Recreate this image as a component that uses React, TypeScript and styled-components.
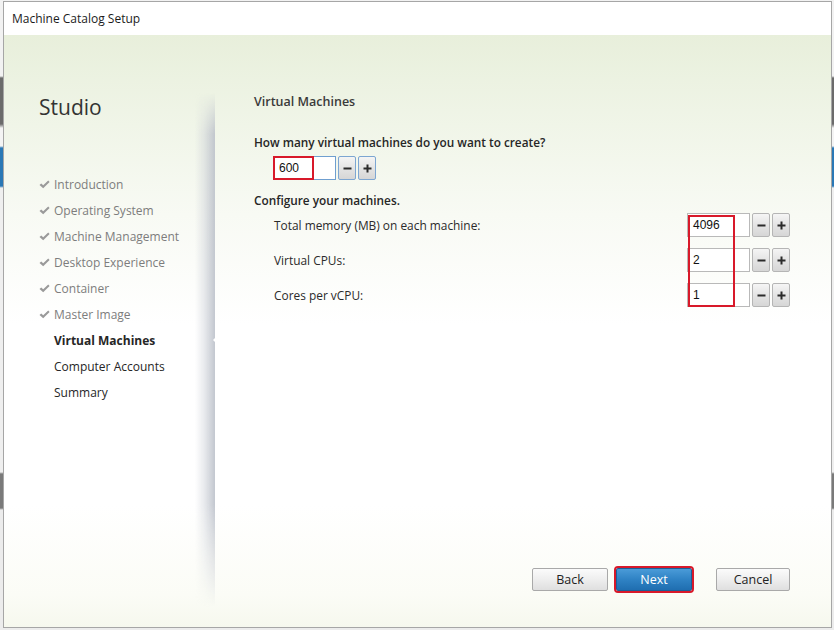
import React from "react";
import styled, { createGlobalStyle, css } from "styled-components";

const GlobalStyle = createGlobalStyle`
  html, body {
    margin: 0;
    padding: 0;
  }
  body {
    width: 834px;
    height: 630px;
    overflow: hidden;
    font-family: "Open Sans", "Noto Sans", sans-serif;
    /* the desktop peeking out behind the dialog */
    background: linear-gradient(
      to bottom,
      #f2f2f2 0px,
      #f2f2f2 76px,
      #6b6b6b 78px,
      #6b6b6b 124px,
      #f4f4f4 128px,
      #f4f4f4 146px,
      #2a78b6 148px,
      #2a78b6 186px,
      #efefef 188px,
      #efefef 472px,
      #7a7a7a 474px,
      #7a7a7a 508px,
      #ececec 510px
    );
  }
`;

const Desktop = styled.div`
  padding: 1px 0 0 3px;
`;

const Window = styled.div`
  width: 829px;
  height: 627px;
  border: 1px solid #a6a6a6;
  box-sizing: border-box;
  display: flex;
  flex-direction: column;
  background: #fff;
`;

const TitleBar = styled.div`
  height: 33px;
  flex: none;
  display: flex;
  align-items: center;
  padding-left: 8px;
  font-size: 12px;
  color: #1b1b1b;
  background: #fff;
`;

const Body = styled.div`
  flex: 1;
  display: flex;
  background: linear-gradient(
    to bottom,
    #e8efdb 0px,
    #f0f5e8 90px,
    #f8faf4 180px,
    #ffffff 290px,
    #ffffff 470px,
    #fbfcf6 560px,
    #f6f8ee 100%
  );
`;

const Sidebar = styled.div`
  width: 211px;
  flex: none;
  padding: 58px 0 0 35px;
  box-sizing: border-box;
`;

const Brand = styled.div`
  font-size: 21px;
  line-height: 28px;
  color: #333;
  font-weight: 500;
  margin-bottom: 50px;
`;

const NavList = styled.ul`
  list-style: none;
  margin: 0;
  padding: 0;
`;

type StepState = "done" | "current" | "todo";

const NavItem = styled.li<{ $state: StepState }>`
  position: relative;
  display: flex;
  align-items: center;
  height: 26px;
  font-size: 12px;
  color: ${({ $state }) => ($state === "done" ? "#7d7d7d" : "#262626")};
  font-weight: ${({ $state }) => ($state === "current" ? 700 : 400)};

  ${({ $state }) =>
    $state === "current" &&
    css`
      &::after {
        content: "";
        position: absolute;
        right: -4px;
        top: 7px;
        width: 0;
        height: 0;
        border-top: 6px solid transparent;
        border-bottom: 6px solid transparent;
        border-right: 6px solid #fff;
        z-index: 2;
      }
    `}
`;

const CheckSlot = styled.span`
  width: 15px;
  flex: none;
  display: flex;
  align-items: center;
`;

const Panel = styled.div`
  position: relative;
  flex: 1;
  display: flex;
  flex-direction: column;
  padding: 58px 41px 36px 39px;

  &::before {
    content: "";
    position: absolute;
    left: -20px;
    top: 58px;
    bottom: 20px;
    width: 20px;
    background: linear-gradient(
      to right,
      rgba(200, 204, 212, 0) 0%,
      rgba(200, 204, 212, 0.4) 45%,
      rgba(188, 193, 202, 0.9) 100%
    );
    -webkit-mask-image: linear-gradient(
      to bottom,
      transparent 0%,
      #000 8%,
      #000 80%,
      transparent 100%
    );
    mask-image: linear-gradient(
      to bottom,
      transparent 0%,
      #000 8%,
      #000 80%,
      transparent 100%
    );
  }
`;

const Heading = styled.h2`
  margin: 0;
  font-size: 12.5px;
  line-height: 18px;
  font-weight: 600;
  color: #3a3a3a;
`;

const Question = styled.div`
  margin-top: 22px;
  font-size: 11.8px;
  line-height: 18px;
  font-weight: 600;
  color: #262626;
`;

const Section = styled(Question)`
  margin-top: 11px;
`;

const SpinnerWrap = styled.div<{ $indent?: boolean }>`
  position: relative;
  display: flex;
  gap: 2px;
  margin-top: ${({ $indent }) => ($indent ? "5px" : "0")};
  margin-left: ${({ $indent }) => ($indent ? "19px" : "0")};
  align-self: flex-start;
`;

const ValueBox = styled.div<{ $focused?: boolean }>`
  width: 63px;
  height: 24px;
  box-sizing: border-box;
  border: 1px solid ${({ $focused }) => ($focused ? "#6f9fd0" : "#b9b9b9")};
  background: #fff;
  font-family: "Liberation Sans", Arial, sans-serif;
  font-size: 12px;
  display: flex;
  align-items: center;
  padding-left: 5px;
  color: #111;
`;

const StepButton = styled.div<{ $focused?: boolean }>`
  width: 18px;
  height: 24px;
  box-sizing: border-box;
  border: 1px solid ${({ $focused }) => ($focused ? "#7da6d2" : "#b5b5b5")};
  border-radius: 2px;
  background: linear-gradient(to bottom, #f5f5f5 0%, #e4e4e4 50%, #d6d6d6 100%);
  display: flex;
  align-items: center;
  justify-content: center;
  color: #2b2b2b;
`;

const Highlight = styled.div<{ $w: number; $h: number }>`
  position: absolute;
  left: 0;
  top: 0;
  width: ${({ $w }) => $w}px;
  height: ${({ $h }) => $h}px;
  border: 2px solid #d8192a;
  box-sizing: border-box;
  pointer-events: none;
`;

const RowGroup = styled.div`
  position: relative;
  margin-top: 4px;
  display: flex;
  flex-direction: column;
  gap: 11px;
`;

const Row = styled.div`
  display: flex;
  align-items: center;
  justify-content: space-between;
  padding-left: 20px;
`;

const RowLabel = styled.span`
  font-size: 11.9px;
  color: #2b2b2b;
`;

const GroupHighlight = styled.div`
  position: absolute;
  right: 55px;
  top: 2px;
  width: 47px;
  height: 92px;
  border: 2px solid #d8192a;
  box-sizing: border-box;
  pointer-events: none;
`;

const Footer = styled.div`
  margin-top: auto;
  display: flex;
  justify-content: flex-end;
  align-items: center;
`;

const DialogButton = styled.button<{ $primary?: boolean; $w?: number }>`
  width: ${({ $w }) => $w ?? 76}px;
  height: 23px;
  box-sizing: border-box;
  font-family: inherit;
  font-size: 12.5px;
  border-radius: 2px;
  cursor: default;
  padding: 0;
  ${({ $primary }) =>
    $primary
      ? css`
          color: #fff;
          border: 1px solid #1b5f98;
          background: linear-gradient(to bottom, #4a9bd8 0%, #2f82c4 50%, #1f6eb0 100%);
          outline: 2px solid #d8192a;
          outline-offset: 0px;
          margin: 0 24px 0 8px;
        `
      : css`
          color: #222;
          border: 1px solid #a9a9a9;
          background: linear-gradient(to bottom, #fbfbfb 0%, #eeeeee 50%, #dfdfdf 100%);
        `}
`;

const Check = () => (
  <svg width="11" height="9" viewBox="0 0 11 9">
    <path d="M0.5 5 L2.2 3.4 L4.2 5.3 L9.2 0.5 L10.6 1.9 L4.2 8.2 Z" fill="#9a9a9a" />
  </svg>
);

const Minus = () => (
  <svg width="9" height="9" viewBox="0 0 9 9">
    <rect x="0.5" y="3.5" width="8" height="2" fill="#2b2b2b" />
  </svg>
);

const Plus = () => (
  <svg width="9" height="9" viewBox="0 0 9 9">
    <rect x="0.5" y="3.5" width="8" height="2" fill="#2b2b2b" />
    <rect x="3.5" y="0.5" width="2" height="8" fill="#2b2b2b" />
  </svg>
);

interface SpinnerProps {
  value: string;
  focused?: boolean;
  indent?: boolean;
  children?: React.ReactNode;
}

const Spinner: React.FC<SpinnerProps> = ({ value, focused, indent, children }) => (
  <SpinnerWrap $indent={indent}>
    <ValueBox $focused={focused}>{value}</ValueBox>
    <StepButton $focused={focused}>
      <Minus />
    </StepButton>
    <StepButton $focused={focused}>
      <Plus />
    </StepButton>
    {children}
  </SpinnerWrap>
);

const steps: { label: string; state: StepState }[] = [
  { label: "Introduction", state: "done" },
  { label: "Operating System", state: "done" },
  { label: "Machine Management", state: "done" },
  { label: "Desktop Experience", state: "done" },
  { label: "Container", state: "done" },
  { label: "Master Image", state: "done" },
  { label: "Virtual Machines", state: "current" },
  { label: "Computer Accounts", state: "todo" },
  { label: "Summary", state: "todo" },
];

const settings = [
  { label: "Total memory (MB) on each machine:", value: "4096" },
  { label: "Virtual CPUs:", value: "2" },
  { label: "Cores per vCPU:", value: "1" },
];

const App: React.FC = () => {
  return (
    <>
      <GlobalStyle />
      <Desktop>
        <Window>
          <TitleBar>Machine Catalog Setup</TitleBar>
          <Body>
            <Sidebar>
              <Brand>Studio</Brand>
              <NavList>
                {steps.map((s) => (
                  <NavItem key={s.label} $state={s.state}>
                    <CheckSlot>{s.state === "done" && <Check />}</CheckSlot>
                    {s.label}
                  </NavItem>
                ))}
              </NavList>
            </Sidebar>
            <Panel>
              <Heading>Virtual Machines</Heading>
              <Question>How many virtual machines do you want to create?</Question>
              <Spinner value="600" focused indent>
                <Highlight $w={41} $h={24} />
              </Spinner>
              <Section>Configure your machines.</Section>
              <RowGroup>
                {settings.map((s) => (
                  <Row key={s.label}>
                    <RowLabel>{s.label}</RowLabel>
                    <Spinner value={s.value} />
                  </Row>
                ))}
                <GroupHighlight />
              </RowGroup>
              <Footer>
                <DialogButton>Back</DialogButton>
                <DialogButton $primary>Next</DialogButton>
                <DialogButton $w={74}>Cancel</DialogButton>
              </Footer>
            </Panel>
          </Body>
        </Window>
      </Desktop>
    </>
  );
};

export default App;
